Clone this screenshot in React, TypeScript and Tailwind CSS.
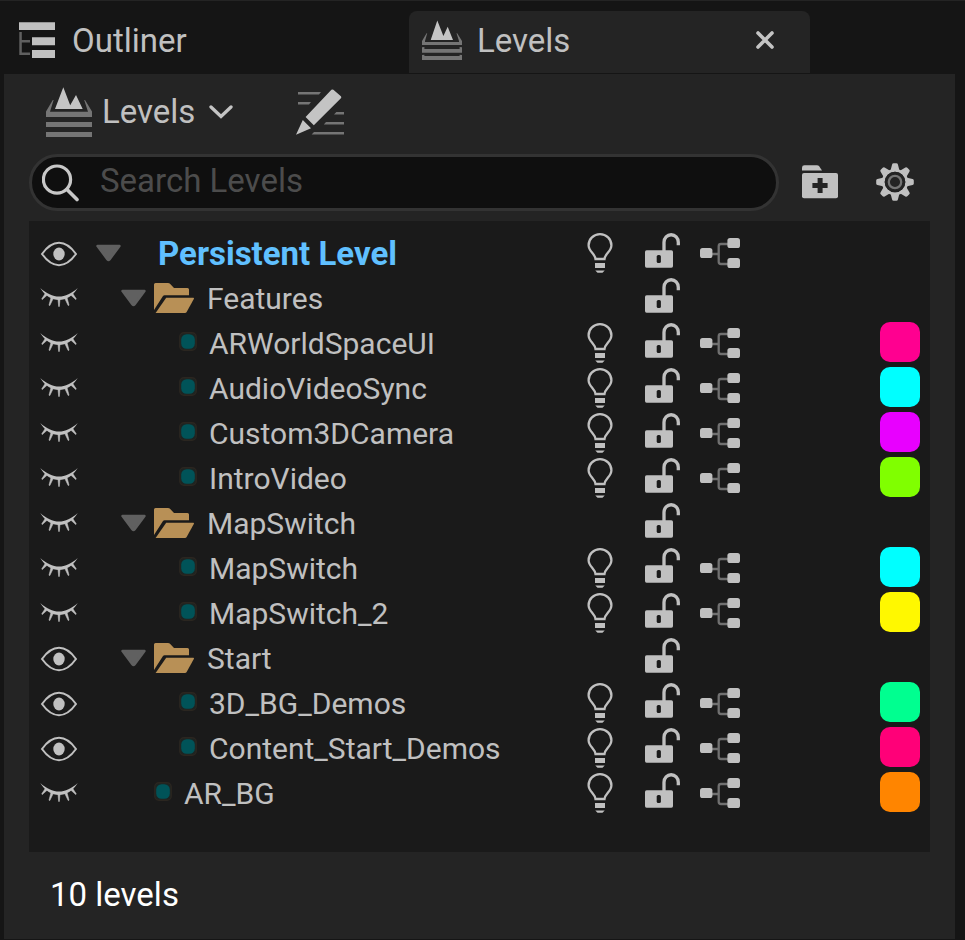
import type { ReactNode } from "react";

type Kind = "root" | "folder" | "level";

interface Row {
  name: string;
  kind: Kind;
  visible: boolean;
  nested?: boolean;
  color?: string;
}

const rows: Row[] = [
  { name: "Persistent Level", kind: "root", visible: true },
  { name: "Features", kind: "folder", visible: false },
  { name: "ARWorldSpaceUI", kind: "level", visible: false, nested: true, color: "bg-[#ff0090]" },
  { name: "AudioVideoSync", kind: "level", visible: false, nested: true, color: "bg-[#00ffff]" },
  { name: "Custom3DCamera", kind: "level", visible: false, nested: true, color: "bg-[#e800ff]" },
  { name: "IntroVideo", kind: "level", visible: false, nested: true, color: "bg-[#80ff00]" },
  { name: "MapSwitch", kind: "folder", visible: false },
  { name: "MapSwitch", kind: "level", visible: false, nested: true, color: "bg-[#00ffff]" },
  { name: "MapSwitch_2", kind: "level", visible: false, nested: true, color: "bg-[#fff800]" },
  { name: "Start", kind: "folder", visible: true },
  { name: "3D_BG_Demos", kind: "level", visible: true, nested: true, color: "bg-[#00ff90]" },
  { name: "Content_Start_Demos", kind: "level", visible: true, nested: true, color: "bg-[#ff0078]" },
  { name: "AR_BG", kind: "level", visible: false, color: "bg-[#ff8500]" },
];

function EyeOpen() {
  return (
    <svg width="38" height="45" viewBox="0 0 38 45" fill="none">
      <path d="M2 23C7 16 13 11.8 19 11.8S31 16 36 23C31 30 25 34.2 19 34.2S7 30 2 23Z" stroke="#c0c0c0" strokeWidth="2" />
      <ellipse cx="19" cy="23" rx="5.7" ry="6.4" fill="#c0c0c0" />
    </svg>
  );
}

function EyeClosed() {
  return (
    <svg width="38" height="45" viewBox="0 0 38 45" fill="none">
      <path d="M.3 12C6 17.4 13 20.6 19 20.6S32 17.4 37.7 12C33 20 26 24 19 24S5 20 .3 12Z" fill="#c0c0c0" />
      <path
        d="M18 23H20L19.3 30.5H18.7ZM11 21.5L13.2 22.5L9.8 29.5L9 29.2ZM27 21.5L24.8 22.5L28.2 29.5L29 29.2ZM5.3 17.5L7 19.3L2.2 23.6L1.8 22.8ZM32.7 17.5L31 19.3L35.8 23.6L36.2 22.8Z"
        fill="#c0c0c0"
        stroke="#c0c0c0"
        strokeWidth=".6"
      />
    </svg>
  );
}

function Expander() {
  return (
    <svg width="25" height="45" viewBox="0 0 25 45">
      <path d="M1.5 15H23.5L13.5 28.5Q12.5 29.6 11.5 28.5Z" fill="#606060" stroke="#606060" strokeWidth="2.4" strokeLinejoin="round" />
    </svg>
  );
}

function FolderOpen() {
  return (
    <svg width="40" height="45" viewBox="0 0 40 45" fill="#b89056">
      <path d="M1.5 7H14Q15.3 7 16 7.8L20 12H33.5Q35 12 35 13.5V19.2H10.5Q9.6 19.2 9 20L0 34V8.5Q0 7 1.5 7Z" />
      <path d="M12.2 21.8H39.4Q40.3 22 39.8 23L32.5 36.2Q32 37 31 37H1.6Z" />
    </svg>
  );
}

function LevelDot() {
  return (
    <svg width="18" height="45" viewBox="0 0 18 45">
      <rect x=".8" y="11.8" width="16.4" height="17.4" rx="4" fill="#1c2422" stroke="#2b2620" strokeWidth="1.4" />
      <rect x="2.2" y="13.2" width="13.6" height="14.6" rx="5.4" fill="#005358" />
    </svg>
  );
}

function Bulb() {
  return (
    <svg width="26" height="45" viewBox="0 0 26 45" fill="none">
      <path d="M8.5 28H17.5C18 22.5 24.4 20.5 24.4 14.2A11.4 11 0 0 0 1.6 14.2C1.6 20.5 8 22.5 8.5 28Z" stroke="#c0c0c0" strokeWidth="2.3" />
      <path d="M8 32H18V37H8ZM8.3 39.5H17.7L15.5 41.8H10.5Z" fill="#c0c0c0" />
    </svg>
  );
}

function Unlocked() {
  return (
    <svg width="35" height="45" viewBox="0 0 35 45" fill="none">
      <path d="M19 21V11.3A7.1 7.5 0 0 1 33.3 11.3V14.3" stroke="#c0c0c0" strokeWidth="3.3" />
      <rect y="19.3" width="28" height="17.4" rx="1.6" fill="#c0c0c0" />
      <rect x="11.7" y="24" width="4.2" height="8" rx="1.6" fill="#1a1a1a" />
    </svg>
  );
}

function Nodes() {
  return (
    <svg width="40" height="45" viewBox="0 0 40 45" fill="none">
      <path d="M12 23H18.7M28 13H21Q18.7 13 18.7 15.3V30.7Q18.7 33 21 33H28" stroke="#707070" strokeWidth="2.3" />
      <g fill="#c0c0c0">
        <rect y="17" width="12.4" height="10" rx="2.6" />
        <rect x="27.4" y="7" width="12.6" height="10" rx="2.6" />
        <rect x="27.4" y="27" width="12.6" height="10" rx="2.6" />
      </g>
    </svg>
  );
}

function OutlinerIcon() {
  return (
    <svg width="36" height="36" viewBox="0 0 36 36">
      <path d="M.3 10H2.8V18H11V20.4H2.8V30.4H11V33H.3Z" fill="#606060" />
      <path d="M0 .2H36V8H0ZM13 15.2H36V23.2H13ZM13 28H36V36H13Z" fill="#c0c0c0" />
    </svg>
  );
}

function LevelsTabIcon() {
  return (
    <svg width="40" height="40" viewBox="0 0 40 40">
      <path
        d="M0 21L4.6 13.2H5.2L3 21V22H37V21L34.5 13.2H35.2L40 21V25H0ZM0 27.3L2.4 27V29H37.6V27L40 27.3V32.7H0ZM0 35L2.4 34.7V36H37.6V34.7L40 35V40H0Z"
        fill="#757575"
      />
      <path d="M8.7 20L15.3 .4L21.4 16L25.7 6.7L31 20Z" fill="#c4c4c4" />
    </svg>
  );
}

function LevelsIcon() {
  return (
    <svg width="46" height="50" viewBox="0 0 46 50">
      <path d="M0 24.5L6.8 13H7.6L4 24.8H42L38.2 13H39L46 24.5V30H0ZM0 35H46V40H0ZM0 45H46V50H0Z" fill="#757575" />
      <path d="M9 22L17.3 .3L24.2 18.3L30 8L36.7 22Z" fill="#c4c4c4" />
    </svg>
  );
}

function PencilIcon() {
  return (
    <svg width="48" height="46" viewBox="0 0 48 46">
      <path
        d="M2 3H25L23 5.4H2ZM2 13H15L13 15.4H2ZM40.3 23H48V25.4H38ZM30 33H48V35.4H27.8ZM18 43H48V45.4H15.6Z"
        fill="#757575"
      />
      <path
        d="M35.4 .8Q36.4 0 37.4 .8L44.9 7.2Q45.8 8.2 44.9 9.2L17.8 36.2L9.6 28ZM6.8 31L15 39.2L0 45.7Z"
        fill="#c4c4c4"
      />
    </svg>
  );
}

function SearchIcon() {
  return (
    <svg width="37" height="38" viewBox="0 0 37 38" fill="none" stroke="#c8c8c8">
      <circle cx="15" cy="15.6" r="13.6" strokeWidth="3.2" />
      <path d="M25 25.6L35 35.6" strokeWidth="3.6" strokeLinecap="round" />
    </svg>
  );
}

function AddFolderIcon() {
  return (
    <svg width="36" height="34" viewBox="0 0 36 34">
      <path d="M2.5 .2H15Q16.2 .2 17 1L20 5.4H0V2.5Q0 .2 2.5 .2Z" fill="#c0c0c0" />
      <rect y="8" width="36" height="25.2" rx="2" fill="#c0c0c0" />
      <path d="M15.6 13H20.6V18H25.6V23H20.6V28H15.6V23H10.4V18H15.6Z" fill="#242424" />
    </svg>
  );
}

function GearIcon() {
  return (
    <svg width="38" height="38" viewBox="-19 -19 38 38">
      <g fill="#c0c0c0">
        {[0, 45, 90, 135, 180, 225, 270, 315].map((angle) => (
          <path key={angle} d="M-4.6 -11L-2.9 -17.6Q-2.6 -18.8 -1.4 -18.8H1.4Q2.6 -18.8 2.9 -17.6L4.6 -11Z" transform={`rotate(${angle})`} />
        ))}
      </g>
      <circle r="11.7" fill="none" stroke="#c0c0c0" strokeWidth="2.8" />
      <circle r="10.3" fill="#242424" />
      <circle r="6.2" fill="none" stroke="#757575" strokeWidth="2.3" />
    </svg>
  );
}

function IconButton({ label, children }: { label: string; children: ReactNode }) {
  return (
    <button type="button" aria-label={label} className="block shrink-0">
      {children}
    </button>
  );
}

function LevelRow({ row }: { row: Row }) {
  const indent = row.kind === "root" ? "pl-[18px]" : row.kind === "folder" ? "pl-[43px]" : row.nested ? "pl-[101px]" : "pl-[76px]";
  return (
    <li className="flex h-[45px] items-center pr-[10px] pl-[11px]">
      <IconButton label={row.visible ? "Hide" : "Show"}>{row.visible ? <EyeOpen /> : <EyeClosed />}</IconButton>
      <div className={`flex min-w-0 flex-1 items-center ${indent}`}>
        {row.kind !== "level" && (
          <IconButton label="Collapse">
            <Expander />
          </IconButton>
        )}
        {row.kind === "folder" && (
          <span className="mr-[13px] ml-2">
            <FolderOpen />
          </span>
        )}
        {row.kind === "level" && (
          <span className="mr-3">
            <LevelDot />
          </span>
        )}
        <span className={row.kind === "root" ? "ml-[37px] truncate text-[33px] font-bold text-[#60c0ff]" : "truncate"}>{row.name}</span>
      </div>
      <div className="flex w-[333px] shrink-0 items-center">
        <span className="w-[58px]">
          {row.kind !== "folder" && (
            <IconButton label="Lighting scenario">
              <Bulb />
            </IconButton>
          )}
        </span>
        <span className="w-[55px]">
          <IconButton label="Lock">
            <Unlocked />
          </IconButton>
        </span>
        {row.kind !== "folder" && (
          <IconButton label="Open level blueprint">
            <Nodes />
          </IconButton>
        )}
        {row.color && <button type="button" aria-label="Level color" className={`mb-[3px] ml-auto size-10 rounded-[10px] ${row.color}`} />}
      </div>
    </li>
  );
}

export default function App() {
  return (
    <div className="flex min-h-screen flex-col border-t border-[#242424] bg-[#151515] pr-[10px] pb-px pl-1 font-[Roboto,'Noto_Sans',sans-serif] text-[33px] leading-[40px] text-[#c0c0c0]">
      <div role="tablist" className="flex h-[73px] pt-[10px] pb-px">
        <button type="button" role="tab" aria-selected="false" className="flex w-[405px] items-center gap-[17px] pl-[15px] pb-1">
          <OutlinerIcon />
          <span className="pt-0.5">Outliner</span>
        </button>
        <div className="flex w-[401px] items-center rounded-t-lg bg-[#242424] pr-9 pl-[13px] pb-1">
          <button type="button" role="tab" aria-selected="true" className="flex flex-1 items-center gap-[15px]">
            <LevelsTabIcon />
            <span className="pt-0.5">Levels</span>
          </button>
          <IconButton label="Close tab">
            <svg width="18" height="18" viewBox="0 0 18 18" fill="none" stroke="#c4c4c4" strokeWidth="3.6" strokeLinecap="round">
              <path d="M2 2L16 16M16 2L2 16" />
            </svg>
          </IconButton>
        </div>
      </div>

      <main className="flex flex-1 flex-col bg-[#242424] px-[25px]">
        <div className="flex h-20 items-center gap-[63px] pb-[5px] pl-[17px]">
          <button type="button" className="flex items-center gap-[10px]">
            <LevelsIcon />
            <span>Levels</span>
            <svg width="26" height="14" viewBox="0 0 26 14" fill="none" stroke="#c4c4c4" strokeWidth="3.3" strokeLinecap="round" className="ml-0.5">
              <path d="M4 2L14 11.5L24 2" />
            </svg>
          </button>
          <IconButton label="Edit levels">
            <PencilIcon />
          </IconButton>
        </div>

        <div className="flex items-center pr-4">
          <label className="flex h-[57px] flex-1 items-center gap-[21px] rounded-full border-[3px] border-[#333333] bg-[#0f0f0f] pl-[10px]">
            <SearchIcon />
            <input type="text" aria-label="Search Levels" placeholder="Search Levels" className="min-w-0 flex-1 bg-transparent pb-1 outline-none placeholder:text-[#4c4c4c]" />
          </label>
          <div className="ml-[23px] flex items-center gap-[38px] pb-0.5">
            <IconButton label="New folder">
              <AddFolderIcon />
            </IconButton>
            <IconButton label="Settings">
              <GearIcon />
            </IconButton>
          </div>
        </div>

        <ul className="mt-[10px] flex-1 bg-[#1a1a1a] py-[10px] text-[30px]">
          {rows.map((row, i) => (
            <LevelRow key={i} row={row} />
          ))}
        </ul>

        <footer className="flex h-[87px] items-center pb-0.5 pl-[21px] text-white">10 levels</footer>
      </main>
    </div>
  );
}
